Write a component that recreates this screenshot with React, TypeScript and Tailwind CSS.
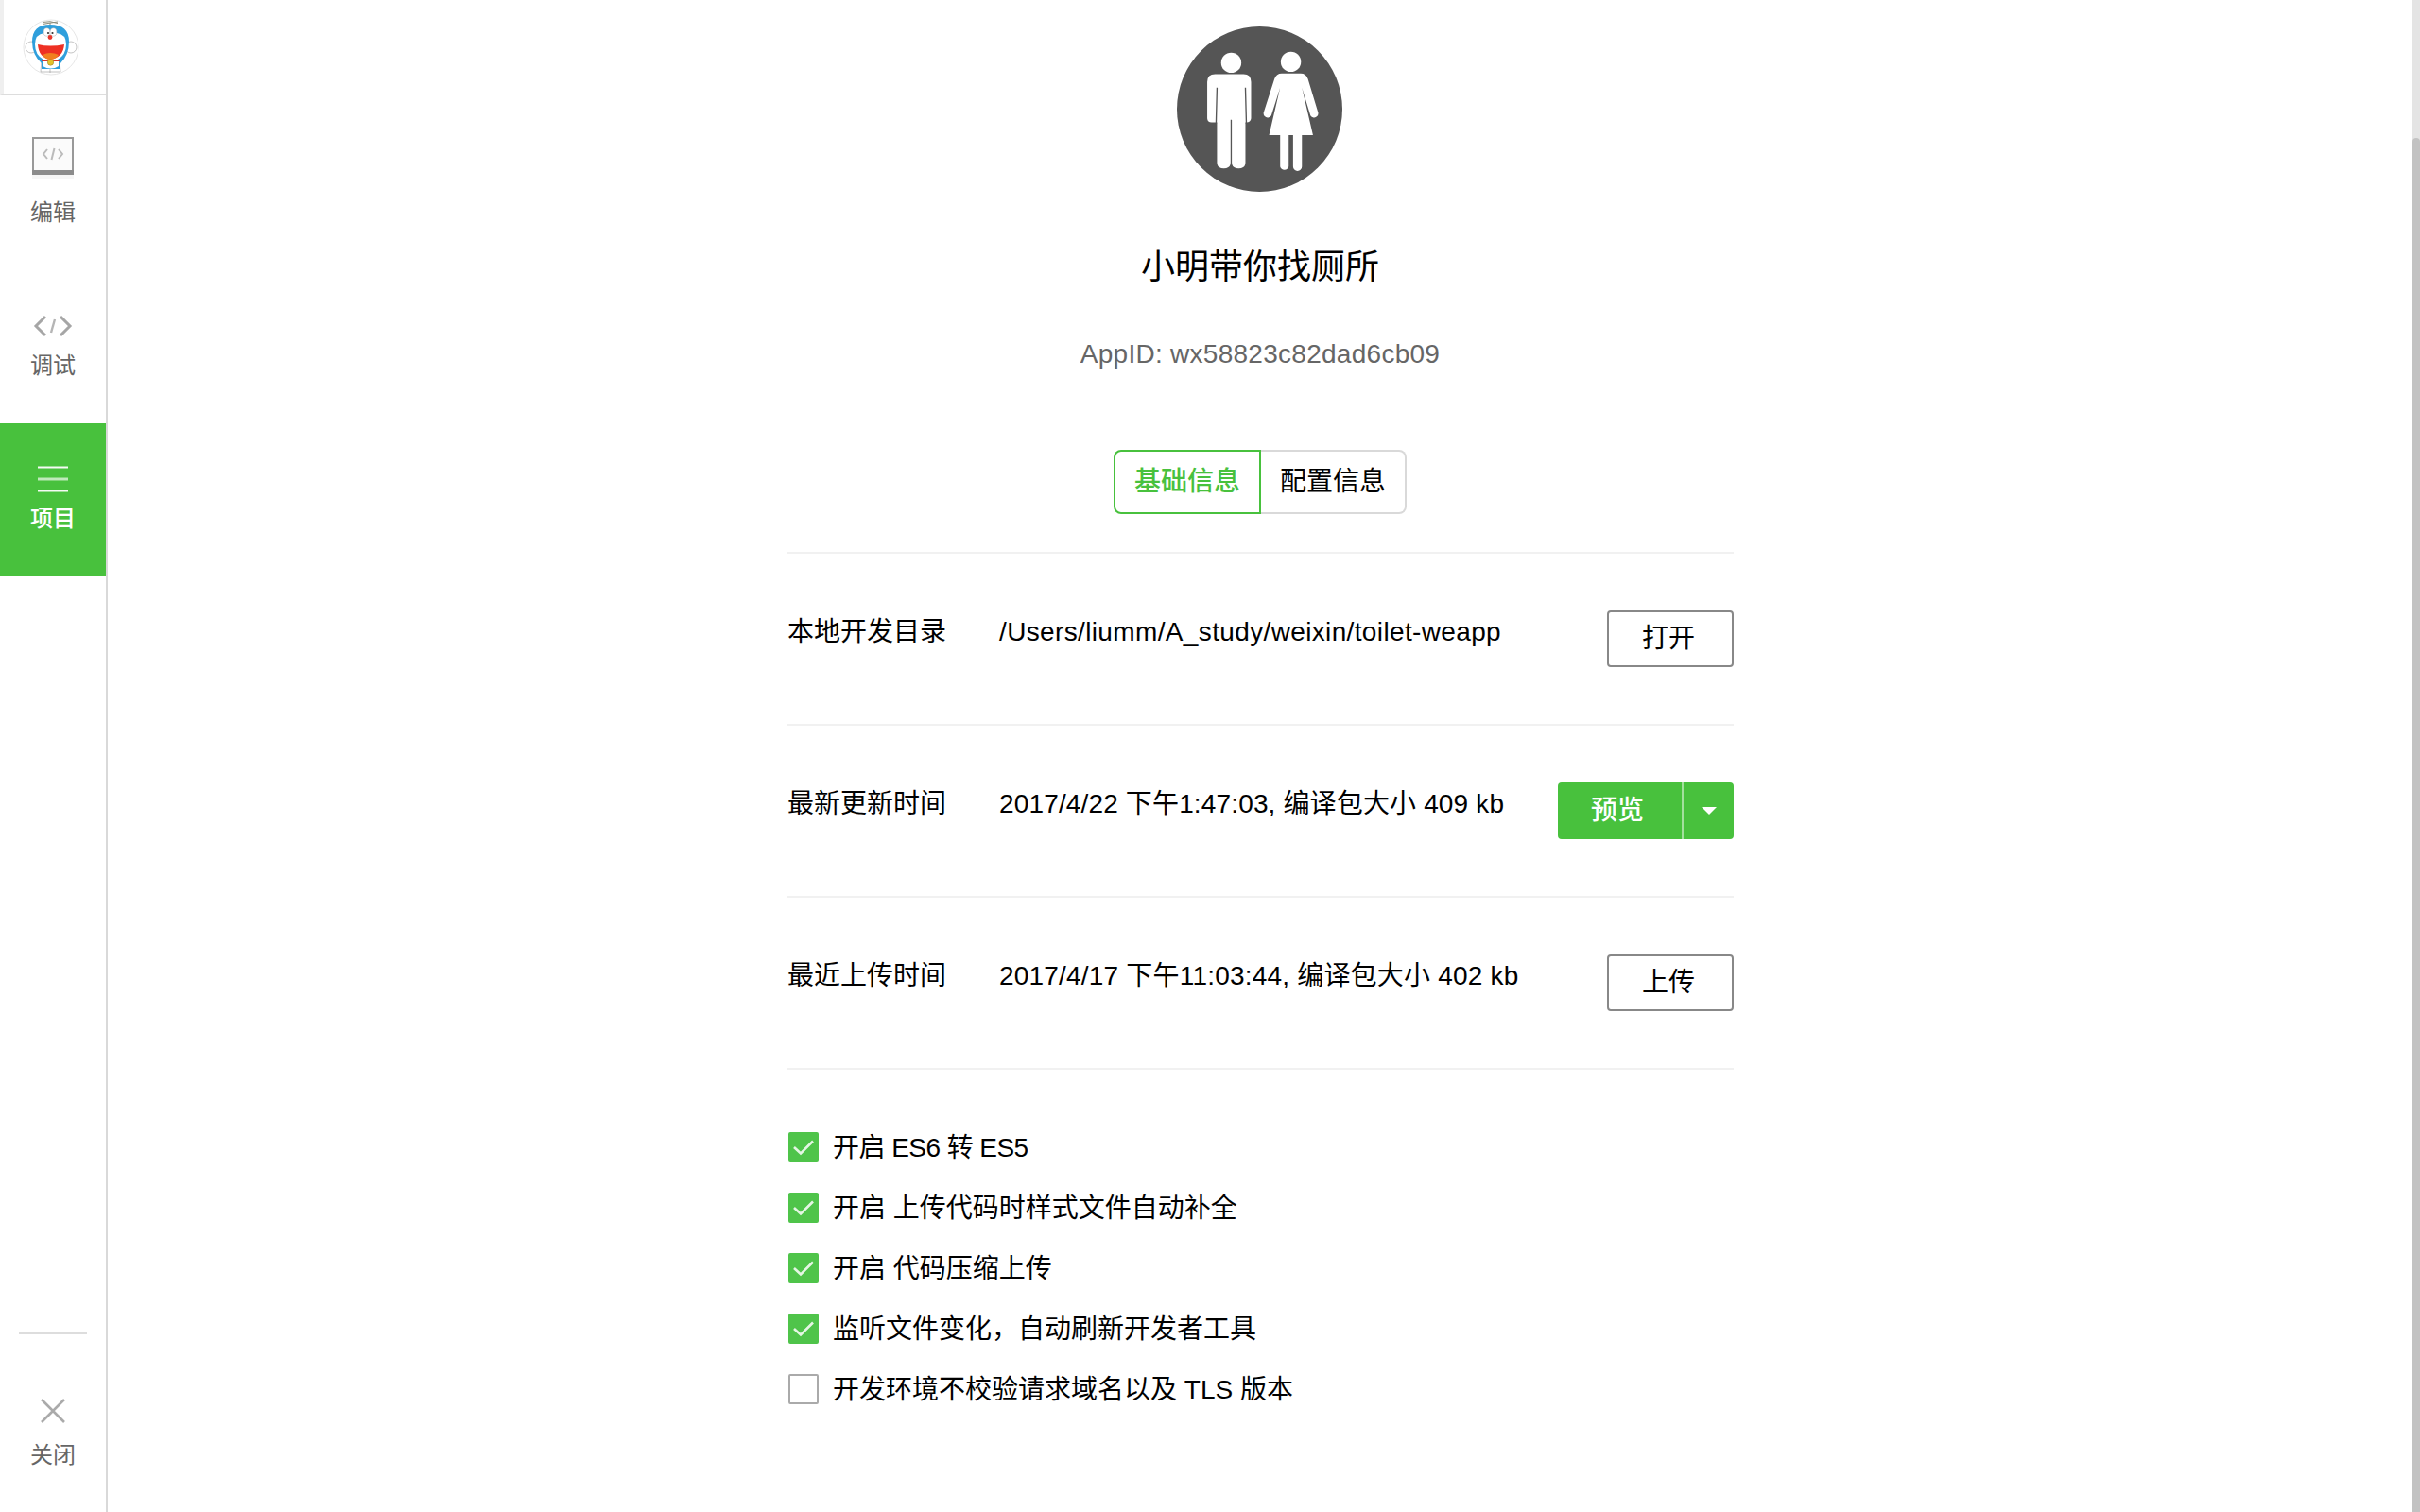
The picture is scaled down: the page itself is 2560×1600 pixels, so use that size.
const fontStack = "[font-family:'Liberation_Sans','Noto_Sans_CJK_SC',sans-serif]"

function Doraemon() {
  return (
    <svg width="60" height="60" viewBox="0 0 60 60">
      <circle cx="30" cy="30" r="29" fill="#fff" stroke="#e6e6e6" strokeWidth="1" />
      <path d="M29 8V4M21 3.5Q29 1.5 37 4.5M21 5.5Q29 4 37 3" stroke="#8c8c7a" strokeWidth="1" fill="none" />
      <circle cx="9" cy="30" r="6" fill="#fff" stroke="#b5b5b5" strokeWidth="0.8" />
      <circle cx="51" cy="30" r="6" fill="#fff" stroke="#b5b5b5" strokeWidth="0.8" />
      <path d="M20 44L19 56H40L39 44Z" fill="#fff" stroke="#999" strokeWidth="0.6" />
      <path d="M10 24Q10 6 29 6Q49 6 49 24Q49 38 40 47V53H20V47Q10 38 10 24Z" fill="#2f9fdc" />
      <path d="M13 27Q13 16 23 15Q28 10 29 13Q33 10 36 15Q46 16 46 27Q46 38 37 43H22Q13 38 13 27Z" fill="#fff" />
      <ellipse cx="25.5" cy="14" rx="3.4" ry="4.2" fill="#fff" stroke="#aaa" strokeWidth="0.5" />
      <ellipse cx="32.5" cy="14" rx="3.4" ry="4.2" fill="#fff" stroke="#aaa" strokeWidth="0.5" />
      <circle cx="27" cy="15" r="1.1" fill="#333" />
      <circle cx="31.5" cy="15" r="1.1" fill="#333" />
      <circle cx="29" cy="19.5" r="2.4" fill="#e8362b" />
      <path d="M16 27Q29 30 44 27Q43 41 29 43Q17 41 16 27Z" fill="#ee3124" />
      <path d="M21 38Q29 34 38 38Q35 43 29 43Q24 43 21 38Z" fill="#f08020" />
      <rect x="20" y="43" width="19" height="2" rx="1" fill="#d8352a" />
      <path d="M21 45H38V50Q30 55 21 50Z" fill="#fff" />
      <circle cx="29.5" cy="46" r="3.2" fill="#e4c22c" stroke="#8f7a1f" strokeWidth="0.5" />
      <path d="M29 53V57" stroke="#999" strokeWidth="0.6" />
    </svg>
  )
}

function ToiletAvatar() {
  return (
    <svg width="175" height="175" viewBox="76 56 524 524">
      <circle cx="338" cy="318" r="262" fill="#555" />
      <circle cx="248" cy="171" r="32" fill="#fff" />
      <path
        d="M197 207H287Q311 207 311 232V347A14 14 0 0 1 296 360H293V492A22 18 0 0 1 250 492V352H246V492A22 18 0 0 1 203 492V360H186A14 14 0 0 1 172 347V232Q172 207 197 207Z"
        fill="#fff"
      />
      <path d="M203 250L200 364M293 250L296 364" stroke="#555" strokeWidth="4" fill="none" />
      <circle cx="437" cy="168" r="32" fill="#fff" />
      <path
        d="M408 205H468Q485 205 491 222L522 325A13 13 0 0 1 499 338L472 250L507 400H472V500A14 14 0 0 1 444 500V400H430V500A14 14 0 0 1 403 500V400H368L403 250L375 338A13 13 0 0 1 352 325L385 222Q391 205 408 205Z"
        fill="#fff"
      />
    </svg>
  )
}

function NavItem({ icon, label, active }: { icon: React.ReactNode; label: string; active?: boolean }) {
  return (
    <div
      className={`h-[162px] flex flex-col items-center pt-[37px] gap-[5px] text-[24px] leading-[30px] ${
        active ? "bg-[#48c13d] text-white font-medium" : "text-[#666]"
      }`}
    >
      <div className="h-[44px] flex items-center justify-center">{icon}</div>
      <span>{label}</span>
    </div>
  )
}

function Row({
  label,
  value,
  action,
  valueClass,
}: {
  label: string
  value: string
  action: React.ReactNode
  valueClass: string
}) {
  return (
    <div className="h-[182px] pt-[60px] flex items-start border-b-2 border-[#f1f1f1] text-[28px] leading-[44px] text-black">
      <div className="w-[224px] pt-px">{label}</div>
      <div className={`flex-1 pt-px ${valueClass}`}>{value}</div>
      {action}
    </div>
  )
}

function OutlineButton({ label }: { label: string }) {
  return (
    <button className="w-[134px] h-[60px] pr-[4px] border-2 border-[#888] rounded-[4px] text-[28px] leading-none text-black">
      {label}
    </button>
  )
}

function Check({ label, on, labelClass }: { label: string; on?: boolean; labelClass?: string }) {
  return (
    <div className="h-[64px] pl-px flex items-center gap-[15px] text-[28px] text-black">
      {on ? (
        <span className="w-[32px] h-[32px] bg-[#4fc44a] rounded-[2px] flex items-center justify-center">
          <svg width="22" height="18" viewBox="0 0 22 18">
            <path d="M1 9L8 15.5L21 2.5" stroke="#fff" strokeWidth="2.6" fill="none" opacity="0.85" />
          </svg>
        </span>
      ) : (
        <span className="w-[32px] h-[32px] bg-white border-2 border-[#aaa] rounded-[2px]" />
      )}
      <span className={`pt-px ${labelClass ?? ""}`}>{label}</span>
    </div>
  )
}

export default function App() {
  return (
    <div className={`h-[1600px] w-full flex overflow-hidden bg-white ${fontStack}`}>
      {/* sidebar */}
      <div className="w-[114px] shrink-0 flex flex-col border-r-2 border-[#d9d9d9]">
        <div className="h-[101px] flex items-center justify-center border-b-2 border-l-4 border-b-[#ddd] border-l-[#efefef] pr-[8px]">
          <Doraemon />
        </div>
        <div className="h-[185px] flex flex-col items-center pt-[44px] gap-[21px] text-[24px] leading-[30px] text-[#666]">
          <svg width="44" height="44" viewBox="0 0 44 44">
            <rect x="0" y="40" width="44" height="4" fill="#f6f6f6" />
            <rect x="1" y="1" width="42" height="38" fill="#fbfbfb" stroke="#999" strokeWidth="2" />
            <rect x="0" y="35" width="44" height="5" fill="#8c8c8c" />
            <path d="M16 13L12 18L16 23M28 13L32 18L28 23M23.5 12L20.5 24" stroke="#bbb" strokeWidth="2" fill="none" />
          </svg>
          <span>编辑</span>
        </div>
        <NavItem
          label="调试"
          icon={
            <svg width="42" height="24" viewBox="0 0 42 24">
              <path d="M13 2L3 12L13 22M29 2L39 12L29 22" stroke="#a6a6a6" strokeWidth="3" fill="none" />
              <path d="M23 5L19 19" stroke="#b5b5b5" strokeWidth="2.4" fill="none" />
            </svg>
          }
        />
        <NavItem
          active
          label="项目"
          icon={
            <svg width="32" height="28" viewBox="0 0 32 28">
              <path d="M0 1.5H32M0 26.5H32" stroke="#fff" strokeWidth="2" opacity="0.95" />
              <path d="M0 14H32" stroke="#fff" strokeWidth="3" opacity="0.65" />
            </svg>
          }
        />
        <div className="mt-auto mx-[20px] border-t-2 border-[#ddd]" />
        <div className="h-[188px] flex flex-col items-center pt-[67px] gap-[18px] text-[24px] leading-[30px] text-[#666]">
          <svg width="28" height="28" viewBox="0 0 28 28">
            <path d="M2 2L26 26M26 2L2 26" stroke="#aaa" strokeWidth="2.6" />
          </svg>
          <span>关闭</span>
        </div>
      </div>

      {/* main */}
      <div className="flex-1 flex flex-col items-center">
        <div className="mt-[28px] mr-[1px]">
          <ToiletAvatar />
        </div>
        <div className="mt-[56px] text-[36px] leading-[48px] text-black">小明带你找厕所</div>
        <div className="mt-[50px] text-[28px] leading-[36px] tracking-[0.27px] text-[#666]">
          AppID: wx58823c82dad6cb09
        </div>
        <div className="mt-[83px] flex text-[28px]">
          <div className="w-[156px] h-[68px] border-2 border-[#48c13d] rounded-l-[8px] text-[#48c13d] font-medium flex items-center justify-center">
            基础信息
          </div>
          <div className="w-[154px] h-[68px] border-2 border-l-0 border-[#d9d9d9] rounded-r-[8px] text-black flex items-center justify-center">
            配置信息
          </div>
        </div>
        <div className="mt-[40px] ml-[1px] w-[1001px] border-t-2 border-[#f1f1f1]">
          <Row
            label="本地开发目录"
            value="/Users/liumm/A_study/weixin/toilet-weapp"
            valueClass="tracking-[0.36px]"
            action={<OutlineButton label="打开" />}
          />
          <Row
            label="最新更新时间"
            value="2017/4/22 下午1:47:03, 编译包大小 409 kb"
            valueClass="tracking-[0.15px]"
            action={
              <div className="flex h-[60px] rounded-[4px] overflow-hidden bg-[#48c13d] text-white">
                <div className="w-[133px] pr-[5px] flex items-center justify-center border-r-2 border-[#a3e09e] text-[28px] font-medium">
                  预览
                </div>
                <div className="w-[53px] flex items-center justify-center">
                  <span className="border-x-[8px] border-x-transparent border-t-[8px] border-t-white" />
                </div>
              </div>
            }
          />
          <Row
            label="最近上传时间"
            value="2017/4/17 下午11:03:44, 编译包大小 402 kb"
            valueClass="tracking-[0.2px]"
            action={<OutlineButton label="上传" />}
          />
          <div className="pt-[50px]">
            <Check on label="开启 ES6 转 ES5" labelClass="tracking-[-0.55px]" />
            <Check on label="开启 上传代码时样式文件自动补全" />
            <Check on label="开启 代码压缩上传" />
            <Check on label="监听文件变化，自动刷新开发者工具" />
            <Check label="开发环境不校验请求域名以及 TLS 版本" />
          </div>
        </div>
      </div>

      {/* scrollbar */}
      <div className="w-[8px] shrink-0 flex flex-col bg-[#e4e4e4]">
        <div className="h-[146px] shrink-0" />
        <div className="flex-1 bg-[#c2c2c2] rounded-t-[4px]" />
      </div>
    </div>
  )
}
